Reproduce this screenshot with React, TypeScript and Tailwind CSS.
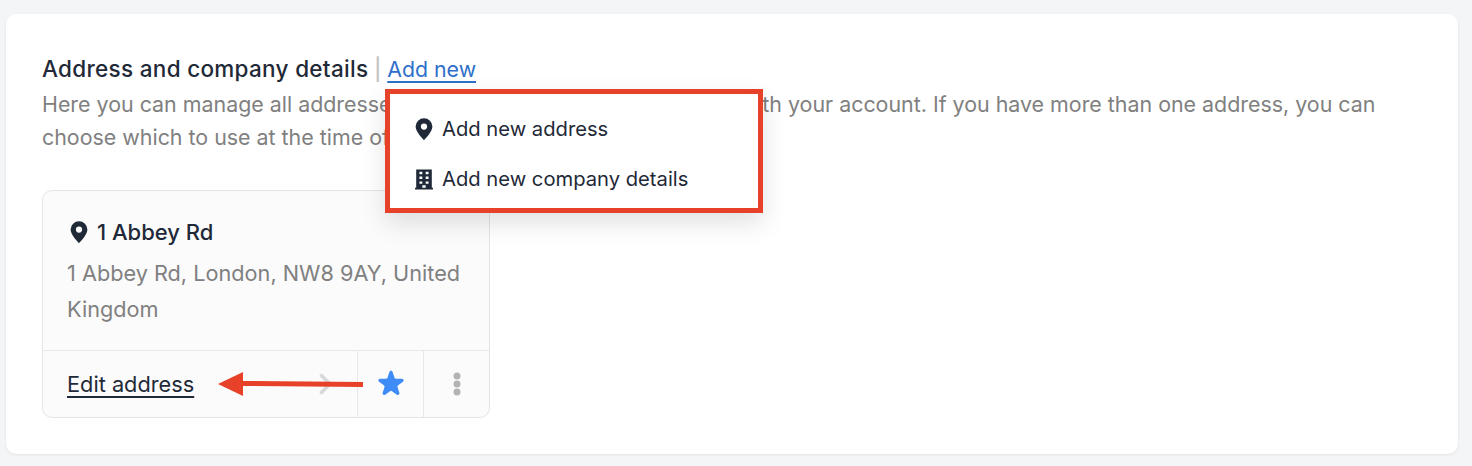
const PIN = 'M10 1a7 7 0 00-7 7c0 4.6 7 11.4 7 11.4s7-6.8 7-11.4a7 7 0 00-7-7zm0 9.6a2.6 2.6 0 110-5.2 2.6 2.6 0 010 5.2z'
const BUILDING =
  'M3.5 2h13v15.2h1v1.5h-15v-1.5h1V2zM6.2 4v2h2.4V4H6.2zm5.2 0v2h2.4V4h-2.4zM6.2 8v2h2.4V8H6.2zm5.2 0v2h2.4V8h-2.4zM6.2 12v2h2.4v-2H6.2zm5.2 0v2h2.4v-2h-2.4zM8.6 15.2v2h2.8v-2H8.6z'
const STAR =
  'M9.049 2.927c.3-.921 1.603-.921 1.902 0l1.07 3.292a1 1 0 00.95.69h3.462c.969 0 1.371 1.24.588 1.81l-2.8 2.034a1 1 0 00-.364 1.118l1.07 3.292c.3.921-.755 1.688-1.54 1.118l-2.8-2.034a1 1 0 00-1.175 0l-2.8 2.034c-.784.57-1.838-.197-1.539-1.118l1.07-3.292a1 1 0 00-.364-1.118L2.98 8.72c-.783-.57-.38-1.81.588-1.81h3.461a1 1 0 00.951-.69l1.07-3.292z'

function Icon({ d, className }: { d: string; className: string }) {
  return (
    <svg viewBox="0 0 20 20" fill="currentColor" className={className}>
      <path fillRule="evenodd" clipRule="evenodd" d={d} />
    </svg>
  )
}

function AddMenu() {
  return (
    <div className="absolute left-[379px] top-[75px] flex h-[124px] w-[378px] flex-col border-[5px] border-[#e8412a] bg-white pl-[22px] pt-[10px] text-[20.2px] shadow-[0_10px_24px_rgba(0,0,0,0.12)]">
      <div className="flex h-[50px] items-center gap-[6px] text-[#1f2937]">
        <Icon d={PIN} className="h-[24px] w-[24px]" />
        <span>Add new address</span>
      </div>
      <div className="flex h-[50px] items-center gap-[6px] text-[#1f2937]">
        <Icon d={BUILDING} className="h-[24px] w-[24px]" />
        <span>Add new company details</span>
      </div>
    </div>
  )
}

function AddressCard() {
  return (
    <div className="mt-[36px] flex h-[228px] w-[448px] flex-col rounded-[10px] border border-[#e5e5e5] bg-[#fbfbfc]">
      <div className="h-[160px] border-b border-[#e8e8e8] px-[24px] pt-[23px]">
        <div className="flex h-[36px] items-center gap-[6px] text-[22px] font-medium text-[#1f2937]">
          <Icon d={PIN} className="h-[24px] w-[24px]" />
          <span>1 Abbey Rd</span>
        </div>
        <p className="mt-[5px] text-[21.7px] leading-[36px] text-[#808080]">1 Abbey Rd, London, NW8 9AY, United Kingdom</p>
      </div>
      <div className="flex flex-1 items-center">
        <div className="flex h-full flex-1 items-center justify-between pl-[24px] pr-[20px]">
          <span className="text-[21.75px] text-[#1f2937] underline decoration-2 underline-offset-[4px]">Edit address</span>
          <svg viewBox="0 0 20 20" fill="none" stroke="#d8d8d8" strokeWidth="3" strokeLinecap="round" strokeLinejoin="round" className="h-[24px] w-[24px]">
            <path d="M7 3l7 7-7 7" />
          </svg>
        </div>
        <div className="flex h-full w-[66px] items-center justify-center border-l border-[#e8e8e8] text-[#3f8cf7]">
          <Icon d={STAR} className="h-[34px] w-[34px]" />
        </div>
        <div className="flex h-full w-[66px] items-center justify-center border-l border-[#e8e8e8]">
          <svg viewBox="0 0 8 26" fill="#b3b3b3" className="h-[26px] w-[8px]">
            <circle cx="4" cy="5" r="3.5" />
            <circle cx="4" cy="13" r="3.5" />
            <circle cx="4" cy="21" r="3.5" />
          </svg>
        </div>
      </div>
    </div>
  )
}

export default function App() {
  return (
    <div className="h-[466px] w-[1472px] overflow-hidden bg-[#f4f5f7] px-[6px] pt-[14px] font-['Inter',sans-serif] text-[21.4px]">
      <div className="relative h-[440px] w-[1452px] rounded-[10px] bg-white px-[36px] pt-[38px] shadow-[0_1px_3px_rgba(0,0,0,0.08)]">
        <div className="h-[36px] leading-[34px] text-[#1f2937]">
          <span className="text-[22.5px] font-medium tracking-[0.3px]">Address and company details</span>
          <span className="text-[21.5px] font-medium text-[#c4c4c4]"> | </span>
          <span className="text-[21.3px] text-[#2f6fcb] underline underline-offset-[4px]">Add new</span>
        </div>
        <p className="w-[1350px] leading-[33px] text-[#808080]">
          Here you can manage all addresses and company details associated with your account. If you have more than one address, you can choose which to use at the time of checkout.
        </p>
        <AddressCard />
        <AddMenu />
        {/* annotation arrow */}
        <svg viewBox="0 0 146 28" className="absolute left-[212px] top-[356px] h-[28px] w-[146px]">
          <path d="M0 14L25 2V26Z" fill="#e8412a" />
          <path d="M24 13.5L145 14.5" stroke="#e8412a" strokeWidth="5" />
        </svg>
      </div>
    </div>
  )
}
